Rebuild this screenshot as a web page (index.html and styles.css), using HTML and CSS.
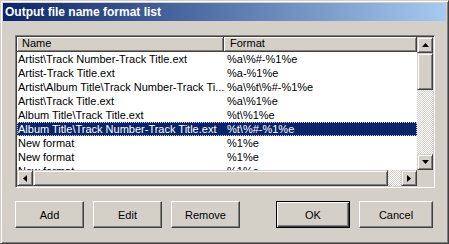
FILE: index.html
```html
<!DOCTYPE html>
<html lang="en">
<head>
    <meta charset="UTF-8">
    <title>Output file name format list</title>
    <link rel="stylesheet" href="styles.css">
</head>
<body>
    <div class="window">
        <div class="titlebar">Output file name format list</div>
        <div class="client">
            <div class="listview">
                <div class="lv-main">
                    <div class="lv-header">
                        <div class="hd hd-name">Name</div>
                        <div class="hd hd-format">Format</div>
                    </div>
                    <div class="lv-rows">
                        <div class="row"><span class="c-name">Artist\Track Number-Track Title.ext</span><span class="c-format">%a\%#-%1%e</span></div>
                        <div class="row"><span class="c-name">Artist-Track Title.ext</span><span class="c-format">%a-%1%e</span></div>
                        <div class="row"><span class="c-name">Artist\Album Title\Track Number-Track Ti...</span><span class="c-format">%a\%t\%#-%1%e</span></div>
                        <div class="row"><span class="c-name">Artist\Track Title.ext</span><span class="c-format">%a\%1%e</span></div>
                        <div class="row"><span class="c-name">Album Title\Track Title.ext</span><span class="c-format">%t\%1%e</span></div>
                        <div class="row selected"><span class="c-name">Album Title\Track Number-Track Title.ext</span><span class="c-format">%t\%#-%1%e</span></div>
                        <div class="row"><span class="c-name">New format</span><span class="c-format">%1%e</span></div>
                        <div class="row"><span class="c-name">New format</span><span class="c-format">%1%e</span></div>
                        <div class="row"><span class="c-name">New format</span><span class="c-format">%1%e</span></div>
                    </div>
                </div>
                <div class="vscroll">
                    <div class="sb-btn">
                        <svg width="7" height="4" viewBox="0 0 7 4"><polygon points="3.5,0 7,4 0,4" fill="#000"/></svg>
                    </div>
                    <div class="sb-thumb v-thumb"></div>
                    <div class="sb-track"></div>
                    <div class="sb-btn">
                        <svg width="7" height="4" viewBox="0 0 7 4"><polygon points="0,0 7,0 3.5,4" fill="#000"/></svg>
                    </div>
                </div>
                <div class="hscroll">
                    <div class="sb-btn">
                        <svg width="4" height="7" viewBox="0 0 4 7"><polygon points="4,0 4,7 0,3.5" fill="#000"/></svg>
                    </div>
                    <div class="sb-thumb h-thumb"></div>
                    <div class="sb-track"></div>
                    <div class="sb-btn">
                        <svg width="4" height="7" viewBox="0 0 4 7"><polygon points="0,0 4,3.5 0,7" fill="#000"/></svg>
                    </div>
                </div>
                <div class="corner"></div>
            </div>

            <div class="buttons">
                <div class="group">
                    <button class="btn">Add</button>
                    <button class="btn">Edit</button>
                    <button class="btn">Remove</button>
                </div>
                <div class="group">
                    <button class="btn btn-default">OK</button>
                    <button class="btn">Cancel</button>
                </div>
            </div>
        </div>
    </div>
</body>
</html>
```

FILE: styles.css
```css
body {
    margin: 0;
    padding: 0;
    background-color: #d4d0c8;
    font-family: 'Liberation Sans', Arial, sans-serif;
    font-size: 11px;
}

.window {
    width: 449px;
    height: 244px;
    box-sizing: border-box;
    background-color: #d4d0c8;
    border-style: solid;
    border-width: 1px;
    border-color: #d4d0c8 #404040 #404040 #d4d0c8;
    box-shadow: inset 1px 1px #fff, inset -1px -1px #808080;
    padding: 2px;
    display: flex;
    flex-direction: column;
}

.titlebar {
    height: 18px;
    line-height: 18px;
    padding-left: 2px;
    color: #fff;
    font-weight: bold;
    font-size: 12px;
    background: linear-gradient(to right, #0a246a, #a6caf0);
}

.client {
    padding: 14px 12px 0 12px;
}

/* list view */
.listview {
    width: 420px;
    height: 153px;
    box-sizing: border-box;
    border: 1px solid;
    border-color: #808080 #fff #fff #808080;
    box-shadow: inset 1px 1px #404040, inset -1px -1px #d4d0c8;
    padding: 1px;
    background-color: #fff;
    display: grid;
    grid-template-columns: 1fr 16px;
    grid-template-rows: 1fr 16px;
}

.lv-main {
    overflow: hidden;
    background-color: #fff;
}

.lv-header {
    display: flex;
    height: 15px;
}

.hd {
    box-sizing: border-box;
    height: 15px;
    line-height: 13px;
    background-color: #d4d0c8;
    border-right: 1px solid #404040;
    border-bottom: 1px solid #404040;
    box-shadow: inset 1px 1px #fff, inset -1px -1px #808080;
    padding-left: 5px;
}

.hd-name {
    width: 207px;
}

.hd-format {
    flex: 1;
    padding-left: 6px;
}

.row {
    display: flex;
    height: 14px;
    line-height: 14px;
    white-space: nowrap;
}

.c-name {
    width: 207px;
    padding-left: 1px;
    overflow: hidden;
    box-sizing: border-box;
}

.c-format {
    padding-left: 3px;
}

.row.selected {
    background-color: #0a246a;
    color: #fff;
    outline: 1px dotted #d4d0c8;
    outline-offset: -1px;
}

/* scrollbars */
.vscroll {
    display: flex;
    flex-direction: column;
}

.hscroll {
    display: flex;
}

.sb-btn {
    width: 16px;
    height: 16px;
    box-sizing: border-box;
    background-color: #d4d0c8;
    border-style: solid;
    border-width: 1px;
    border-color: #d4d0c8 #404040 #404040 #d4d0c8;
    box-shadow: inset 1px 1px #fff, inset -1px -1px #808080;
    display: flex;
    align-items: center;
    justify-content: center;
    flex-shrink: 0;
}

.sb-btn svg {
    display: block;
}

.sb-thumb {
    box-sizing: border-box;
    background-color: #d4d0c8;
    border-style: solid;
    border-width: 1px;
    border-color: #d4d0c8 #404040 #404040 #d4d0c8;
    box-shadow: inset 1px 1px #fff, inset -1px -1px #808080;
}

.v-thumb {
    height: 37px;
}

.h-thumb {
    width: 355px;
}

.sb-track {
    flex: 1;
    background: repeating-conic-gradient(#fff 0 25%, #d4d0c8 0 50%) 0 0 / 2px 2px;
}

.corner {
    background-color: #d4d0c8;
}

/* buttons */
.buttons {
    display: flex;
    justify-content: space-between;
    margin-top: 13px;
    padding-right: 1px;
}

.group {
    display: flex;
    gap: 9px;
}

.btn {
    width: 69px;
    height: 27px;
    box-sizing: border-box;
    font-family: 'Liberation Sans', Arial, sans-serif;
    font-size: 11px;
    color: #000;
    background-color: #d4d0c8;
    border-style: solid;
    border-width: 1px;
    border-color: #fff #404040 #404040 #fff;
    box-shadow: inset -1px -1px #808080, inset 1px 1px #d4d0c8;
    padding: 0;
}

.group + .group .btn {
    width: 74px;
}

.btn-default {
    border-color: #000;
    box-shadow: inset 1px 1px #fff, inset -1px -1px #404040, inset -2px -2px #808080;
}
```
